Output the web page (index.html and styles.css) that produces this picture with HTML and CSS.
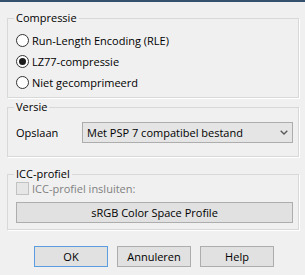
FILE: index.html
```html
<!DOCTYPE html>
<html lang="nl">
<head>
    <meta charset="UTF-8">
    <meta name="viewport" content="width=device-width, initial-scale=1.0">
    <title>PSP opslaan</title>
    <link rel="stylesheet" href="styles.css">
</head>
<body>
    <fieldset class="group compress">
        <legend>Compressie</legend>
        <div class="options">
            <div class="option"><span class="radio"></span>Run-Length Encoding (RLE)</div>
            <div class="option"><span class="radio checked"></span>LZ77-compressie</div>
            <div class="option"><span class="radio"></span>Niet gecomprimeerd</div>
        </div>
    </fieldset>
    <fieldset class="group version">
        <legend>Versie</legend>
        <div class="row">
            <span class="label">Opslaan</span>
            <div class="combo">
                <span>Met PSP 7 compatibel bestand</span>
                <svg width="8" height="5" viewBox="0 0 8 5"><path d="M0.7 0.7 L4 4 L7.3 0.7" fill="none" stroke="#5a5a5a" stroke-width="1.4"/></svg>
            </div>
        </div>
    </fieldset>
    <fieldset class="group icc">
        <legend>ICC-profiel</legend>
        <div class="option disabled"><span class="check"></span>ICC-profiel insluiten:</div>
        <button class="button wide">sRGB Color Space Profile</button>
    </fieldset>
    <div class="buttons">
        <button class="button default">OK</button>
        <button class="button">Annuleren</button>
        <button class="button">Help</button>
    </div>
</body>
</html>
```

FILE: styles.css
```css
body {
    margin: 0;
    height: 273px;
    overflow: hidden;
    background: #f0f0f0;
    border-top: 2px solid #34506c;
    font-family: "Open Sans", sans-serif;
    font-size: 11px;
    color: #000;
}
.group {
    box-sizing: border-box;
    width: 292px;
    margin: 0 0 0 7px;
    padding: 0 5px 0 8px;
    border: 1px solid #d8d8d8;
    box-shadow: 1px 1px 0 #fff;
}
.group legend {
    padding: 0 2px;
    margin-left: -2px;
    line-height: 14px;
}
.compress {
    margin-top: 9px;
    padding-top: 9px;
    padding-bottom: 8px;
}
.options {
    display: flex;
    flex-direction: column;
    gap: 8px;
}
.option {
    display: flex;
    align-items: center;
    height: 13px;
    line-height: 13px;
    white-space: nowrap;
}
.radio {
    box-sizing: border-box;
    width: 13px;
    height: 13px;
    margin-right: 3px;
    border: 1px solid #333;
    border-radius: 50%;
    background: #fff;
    display: flex;
    align-items: center;
    justify-content: center;
}
.radio.checked::after {
    content: "";
    width: 7px;
    height: 7px;
    border-radius: 50%;
    background: #1a1a1a;
}
.check {
    box-sizing: border-box;
    width: 13px;
    height: 13px;
    margin-right: 3px;
    border: 1px solid #c2c2c2;
    background: #e6e6e6;
}
.disabled {
    color: #808080;
}
.version {
    margin-top: 2px;
    padding-top: 8px;
    padding-bottom: 13px;
}
.row {
    display: flex;
    align-items: center;
}
.label {
    width: 66px;
}
.combo {
    box-sizing: border-box;
    width: 211px;
    height: 21px;
    padding: 0 4px 0 4px;
    border: 1px solid #adadad;
    background: #e5e5e5;
    display: flex;
    align-items: center;
    justify-content: space-between;
}
.icc {
    margin-top: 10px;
    padding-top: 1px;
    padding-bottom: 6px;
}
.button {
    box-sizing: border-box;
    height: 21px;
    padding: 0;
    border: 1px solid #adadad;
    background: #e1e1e1;
    font: inherit;
    color: #000;
    display: block;
}
.button.wide {
    width: 277px;
    margin-top: 7px;
}
.button.default {
    border-color: #5a9ee0;
}
.buttons {
    display: flex;
    gap: 9px;
    margin-top: 16px;
    padding-left: 34px;
}
.buttons .button {
    width: 74px;
}
```
